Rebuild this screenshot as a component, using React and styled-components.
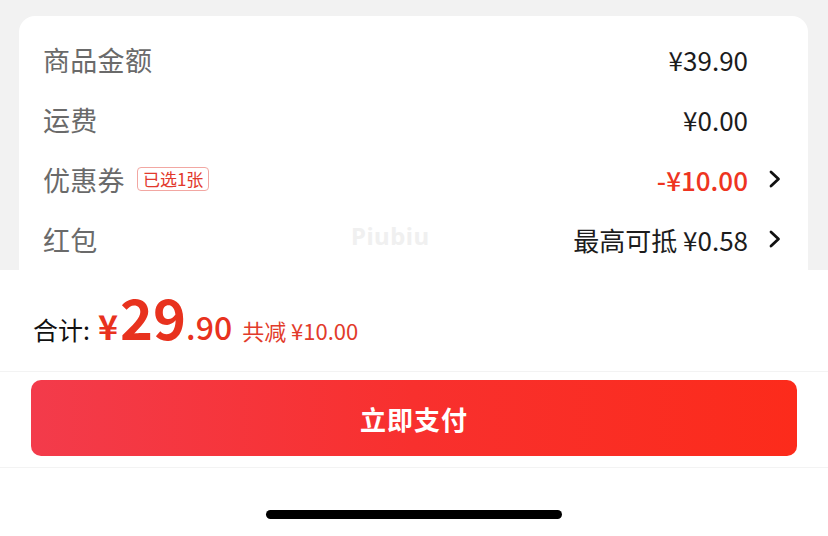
import React from 'react'
import styled, { createGlobalStyle } from 'styled-components'

const GlobalStyle = createGlobalStyle`
  html, body {
    margin: 0;
    padding: 0;
    background: #ffffff;
  }
  body {
    font-family: "Noto Sans CJK SC", "Noto Sans", sans-serif;
  }
`

const Screen = styled.div`
  width: 828px;
  height: 536px;
  display: flex;
  flex-direction: column;
  overflow: hidden;
  position: relative;
`

const TopArea = styled.div`
  height: 270px;
  background: #f2f2f2;
  padding: 16px 20px 0 19px;
  box-sizing: border-box;
  overflow: hidden;
  position: relative;
`

const Card = styled.div`
  background: #ffffff;
  border-radius: 16px;
  padding: 13px 27px 20px 24px;
  display: flex;
  flex-direction: column;
`

const Row = styled.div`
  height: 60px;
  display: flex;
  align-items: center;
`

const Label = styled.span`
  font-size: 27px;
  color: #6a6a6a;
  letter-spacing: 0.3px;
`

const Badge = styled.span`
  margin-left: 12px;
  height: 24px;
  padding: 0 5px;
  box-sizing: border-box;
  border: 1px solid #f2a7a2;
  border-radius: 4px;
  color: #e2392c;
  font-size: 17px;
  line-height: 22px;
  display: inline-flex;
  align-items: center;
`

const Value = styled.span`
  margin-left: auto;
  font-size: 26px;
  color: ${p => (p.red ? '#ee3421' : '#1c1c1c')};
  font-weight: ${p => (p.red ? 500 : 400)};
`

const ArrowSlot = styled.span`
  width: 33px;
  display: flex;
  justify-content: flex-end;
  align-items: center;
`

const Watermark = styled.div`
  position: absolute;
  left: 351px;
  top: 219px;
  font-family: "Noto Sans", sans-serif;
  font-size: 24px;
  font-weight: 700;
  color: #f0f0f0;
  letter-spacing: 0.5px;
`

const Bottom = styled.div`
  flex: 1;
  background: #ffffff;
  display: flex;
  flex-direction: column;
`

const Summary = styled.div`
  height: 102px;
  display: flex;
  align-items: baseline;
  padding: 18px 0 0 33px;
  box-sizing: border-box;
  border-bottom: 1px solid #f3f3f3;
`

const TotalLabel = styled.span`
  font-size: 25px;
  color: #111111;
  margin-right: 8px;
`

const Money = styled.span`
  color: #e8321e;
  font-weight: ${p => p.weight || 500};
  font-size: ${p => p.size}px;
  margin-right: ${p => p.gap || 0}px;
  line-height: 1;
`

const Saved = styled.span`
  color: #e23b2b;
  font-size: 22px;
  margin-left: 10px;
`

const ButtonBar = styled.div`
  height: 96px;
  padding: 8px 31px 0 31px;
  box-sizing: border-box;
  border-bottom: 1px solid #f3f3f3;
`

const PayButton = styled.button`
  width: 100%;
  height: 76px;
  border: none;
  border-radius: 10px;
  background: linear-gradient(90deg, #f33b4b 0%, #f8302e 50%, #fc2b1b 100%);
  color: #ffffff;
  font-family: "Noto Sans CJK SC", sans-serif;
  font-size: 26px;
  font-weight: 700;
  letter-spacing: 1px;
  display: flex;
  align-items: center;
  justify-content: center;
`

const HomeArea = styled.div`
  flex: 1;
  display: flex;
  justify-content: center;
  padding-top: 42px;
`

const HomeBar = styled.div`
  width: 296px;
  height: 9px;
  border-radius: 5px;
  background: #000000;
`

const Chevron = () => (
  <svg width="12" height="18" viewBox="0 0 12 18">
    <polyline
      points="2,2 9.5,9 2,16"
      fill="none"
      stroke="#111"
      strokeWidth="2.8"
      strokeLinecap="round"
      strokeLinejoin="round"
    />
  </svg>
)

const rows = [
  { label: '商品金额', value: '¥39.90' },
  { label: '运费', value: '¥0.00' },
  { label: '优惠券', badge: '已选1张', value: '-¥10.00', red: true, arrow: true },
  { label: '红包', value: '最高可抵 ¥0.58', arrow: true },
]

export default function App() {
  return (
    <Screen>
      <GlobalStyle />
      <TopArea>
        <Card>
          {rows.map(r => (
            <Row key={r.label}>
              <Label>{r.label}</Label>
              {r.badge && <Badge>{r.badge}</Badge>}
              <Value red={r.red}>{r.value}</Value>
              <ArrowSlot>{r.arrow && <Chevron />}</ArrowSlot>
            </Row>
          ))}
        </Card>
        <Watermark>Piubiu</Watermark>
      </TopArea>
      <Bottom>
        <Summary>
          <TotalLabel>合计:</TotalLabel>
          <Money size={34} weight={700} gap={2}>¥</Money>
          <Money size={56} weight={700}>29</Money>
          <Money size={32}>.90</Money>
          <Saved>共减 ¥10.00</Saved>
        </Summary>
        <ButtonBar>
          <PayButton>立即支付</PayButton>
        </ButtonBar>
        <HomeArea>
          <HomeBar />
        </HomeArea>
      </Bottom>
    </Screen>
  )
}
